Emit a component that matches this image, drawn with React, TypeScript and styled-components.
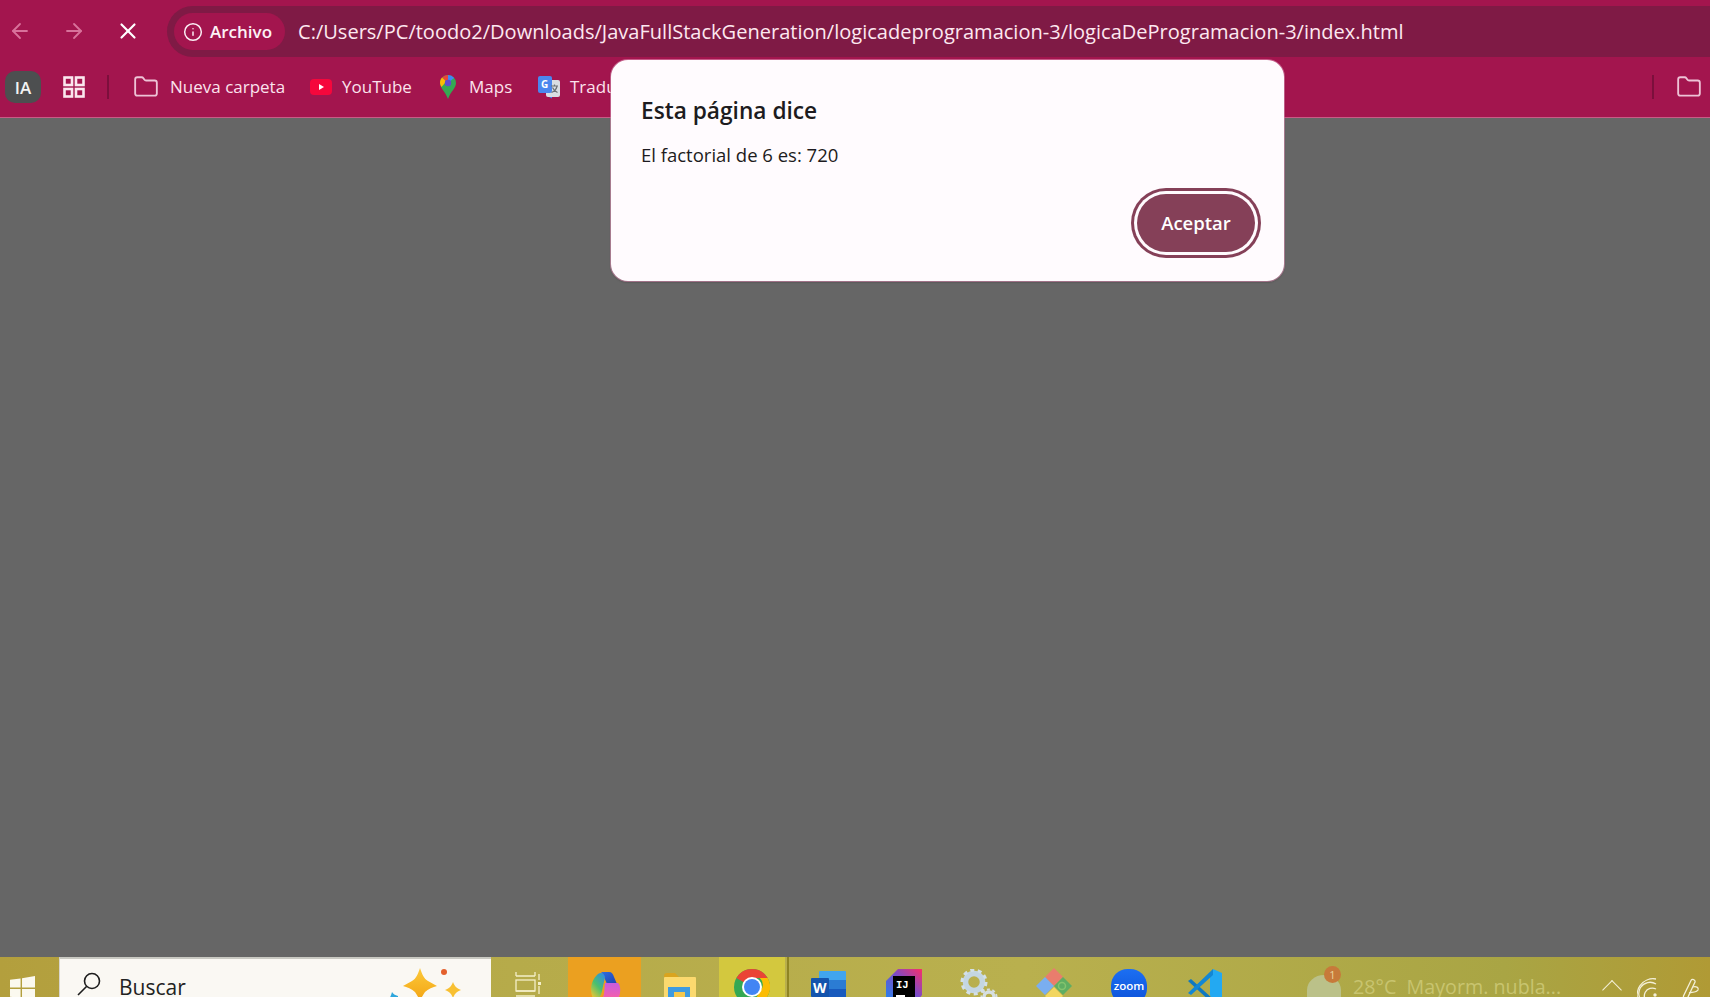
import React from 'react';
import styled, { createGlobalStyle } from 'styled-components';
import { ArrowLeft, ArrowRight, X, Info, Folder } from 'lucide-react';

const GlobalStyle = createGlobalStyle`
  html, body {
    margin: 0;
    padding: 0;
    height: 100%;
    overflow: hidden;
    background: #666666;
    font-family: "Open Sans", "Noto Sans", "Liberation Sans", sans-serif;
  }
`;

const bookmarks = [
  { name: 'Nueva carpeta', icon: <FolderIcon />, width: 175, gap: 11 },
  { name: 'YouTube', icon: <YoutubeIcon />, width: 127, gap: 8 },
  { name: 'Maps', icon: <MapsIcon />, width: 101, gap: 8 },
  { name: 'Traductor', icon: <TranslateIcon />, width: 120, gap: 8 },
];

function FolderIcon() {
  return <Folder size={26} strokeWidth={1.7} color="#eec3d6" />;
}

function YoutubeIcon() {
  return (
    <svg width="24" height="18" viewBox="0 0 24 18">
      <rect x="1" y="1" width="22" height="16" rx="4" fill="#f5073c" />
      <path d="M10 6l5 3-5 3z" fill="#fff" />
    </svg>
  );
}

function MapsIcon() {
  return (
    <svg width="18" height="26" viewBox="0 0 18 26">
      <path d="M9 1a8 8 0 0 1 8 8c0 5-5 8-8 16C6 17 1 14 1 9a8 8 0 0 1 8-8z" fill="#35a853" />
      <path d="M3 3.5A8 8 0 0 1 9 1v5a3 3 0 0 0-2.300 1z" fill="#e8453c" />
      <path d="M9 1a8 8 0 0 1 6.200 3L11.300 7A3 3 0 0 0 9 6z" fill="#4285f4" />
      <path d="M1 9c0-2 .7-4 2-5.500L6.700 7C6.200 7.600 6 8.300 6 9l-3.500 4A8 8 0 0 1 1 9z" fill="#fbbc04" />
      <circle cx="9" cy="9" r="3.200" fill="#5f4bd0" />
    </svg>
  );
}

function TranslateIcon() {
  return (
    <svg width="24" height="24" viewBox="0 0 24 24">
      <rect x="9" y="5" width="14" height="17" rx="2" fill="#d9dde3" />
      <path d="M12 22l3 1.500V22z" fill="#4285f4" />
      <rect x="1" y="1" width="14" height="17" rx="2" fill="#4a86ee" />
      <text x="4" y="13" fontSize="10" fontWeight="700" fill="#fff" fontFamily="Open Sans">G</text>
      <path d="M14 11h7M17.500 9.500v2M20 11.500c-1 3.500-3 5-5.500 6M15.500 12.500c1 2.500 3 4 5 5" stroke="#6b7076" strokeWidth="1.200" fill="none" />
    </svg>
  );
}

function TilesIcon() {
  return (
    <svg width="22" height="22" viewBox="0 0 22 22" fill="none" stroke="#fbe6ee" strokeWidth="2.600">
      <rect x="1.500" y="1.500" width="7.500" height="7.500" />
      <rect x="13" y="1.500" width="7.500" height="7.500" />
      <rect x="1.500" y="13" width="7.500" height="7.500" />
      <rect x="13" y="13" width="7.500" height="7.500" />
    </svg>
  );
}

function WindowsLogo() {
  return (
    <svg width="25" height="25" viewBox="0 0 26 26" fill="#fbf9ef">
      <path d="M0 4l11-1.500V12H0zM12.500 2.300L26 0v12H12.500zM0 13.500h11V23L0 21.500zM12.500 13.500H26V26l-13.500-2.200z" />
    </svg>
  );
}

function SearchGlass() {
  return (
    <svg width="26" height="26" viewBox="0 0 26 26" fill="none" stroke="#1d1d1d" strokeWidth="1.600">
      <circle cx="16" cy="10" r="7.500" />
      <path d="M10.500 15.500L2 24" />
    </svg>
  );
}

function Sparkles() {
  return (
    <svg width="84" height="40" viewBox="0 0 84 40">
      <defs>
        <linearGradient id="starFill" x1="0" y1="0" x2="0" y2="1">
          <stop offset="0" stopColor="#fcc93a" />
          <stop offset="1" stopColor="#f3a312" />
        </linearGradient>
      </defs>
      <path d="M7 29c1 2 3 3 6 4v7H0c3-2 6-6 7-11z" fill="#2ea6dc" />
      <path d="M35 5c2 6 4 11 8 13 3 2 6 3 9 5-4 1-9 3-12 6-2 3-4 6-5 10-1-4-3-7-5-10-3-3-8-5-12-6 3-2 6-3 9-5 4-2 6-7 8-13z" fill="url(#starFill)" />
      <circle cx="59" cy="9" r="3" fill="#e4602c" />
      <path d="M68 19c1 2.500 2 4 3 5 1 1 2.500 2 5 3-2.500 1-4 2-5 3-1 1-2 2.500-3 5-1-2.500-2-4-3-5-1-1-2.500-2-5-3 2.500-1 4-2 5-3 1-1 2-2.500 3-5z" fill="#f8c032" />
    </svg>
  );
}

function TaskViewIcon() {
  return (
    <svg width="30" height="34" viewBox="0 0 30 34" fill="none" stroke="#f4efc8" strokeWidth="1.300">
      <path d="M3 0v4M22 0v4M3 4h19M3 19h19M3 24h19" />
      <rect x="3" y="8" width="19" height="11" />
      <path d="M26 2v6M26 14v8" />
      <rect x="25" y="10" width="3" height="3" fill="#f4efc8" stroke="none" />
    </svg>
  );
}

function CopilotIcon() {
  return (
    <svg width="32" height="30" viewBox="0 0 32 30">
      <defs>
        <linearGradient id="cpLeft" x1="0.800" y1="0" x2="0.200" y2="1">
          <stop offset="0" stopColor="#2f8fe0" />
          <stop offset="0.500" stopColor="#4cc06c" />
          <stop offset="1" stopColor="#f4c62e" />
        </linearGradient>
        <linearGradient id="cpTop" x1="0" y1="0" x2="1" y2="1">
          <stop offset="0" stopColor="#2f6fe0" />
          <stop offset="1" stopColor="#1f3fb0" />
        </linearGradient>
        <linearGradient id="cpRight" x1="0.500" y1="0" x2="0.500" y2="1">
          <stop offset="0" stopColor="#c75ce0" />
          <stop offset="0.700" stopColor="#f05fb0" />
          <stop offset="1" stopColor="#f58a4a" />
        </linearGradient>
      </defs>
      <path d="M12 0h8c3 0 4 2 5 5l3 7H18l-3-7c-1-3-2-4-3-5z" fill="url(#cpTop)" />
      <path d="M9 2c3-2 6-1 7 3l-3 14c-1 5-3 8-8 9C1 22 0 10 9 2z" fill="url(#cpLeft)" />
      <path d="M16 11h13c3 3 3 11 0 16-1 2-3 3-6 3H9c3-1 5-4 6-8z" fill="url(#cpRight)" />
    </svg>
  );
}

function ExplorerIcon() {
  return (
    <svg width="32" height="30" viewBox="0 0 32 30">
      <path d="M0 3c0-2 1-3 3-3h8l4 4H0z" fill="#d9a41f" />
      <rect x="0" y="4" width="32" height="26" rx="1" fill="#fbd96e" />
      <rect x="4" y="14" width="22" height="16" fill="#3f9be0" />
      <rect x="10" y="19" width="11" height="11" fill="#f6c84e" />
    </svg>
  );
}

function ChromeIcon() {
  return (
    <svg width="36" height="36" viewBox="0 0 36 36">
      <circle cx="18" cy="18" r="18" fill="#34a853" />
      <path d="M18 0a18 18 0 0 1 15.600 9H18a9 9 0 0 0-7.800 4.500L2.400 9A18 18 0 0 1 18 0z" fill="#ea4335" />
      <path d="M33.600 9A18 18 0 0 1 18 36l7.800-13.500A9 9 0 0 0 25.800 9z" fill="#fbbc04" />
      <circle cx="18" cy="18" r="10" fill="#fff" />
      <circle cx="18" cy="18" r="8" fill="#4285f4" />
    </svg>
  );
}

function WordIcon() {
  return (
    <svg width="36" height="28" viewBox="0 0 36 28">
      <path d="M9 0h25a1 1 0 0 1 1 1v10H8V1a1 1 0 0 1 1-1z" fill="#41a5ee" />
      <rect x="8" y="9" width="27" height="10" fill="#2b7cd3" />
      <rect x="8" y="18" width="27" height="10" fill="#185abd" />
      <rect x="0" y="7" width="18" height="19" rx="1" fill="#1454ad" />
      <text x="2" y="22" fontSize="14" fontWeight="700" fill="#fff" fontFamily="Open Sans">W</text>
    </svg>
  );
}

function IntellijIcon() {
  return (
    <svg width="36" height="34" viewBox="0 0 36 34">
      <defs>
        <linearGradient id="ijA" x1="0" y1="1" x2="1" y2="0">
          <stop offset="0" stopColor="#1c8af0" />
          <stop offset="0.550" stopColor="#7a4bc8" />
          <stop offset="1" stopColor="#fa2e68" />
        </linearGradient>
      </defs>
      <path d="M12 0h24v26l-6 8H0V12z" fill="url(#ijA)" />
      <rect x="7" y="7" width="22" height="27" fill="#000" />
      <text x="10" y="19" fontSize="10.500" fontWeight="700" fill="#fff" fontFamily="Liberation Mono">IJ</text>
      <rect x="10" y="26" width="9" height="2" fill="#fff" />
    </svg>
  );
}

function GearIcon() {
  return (
    <svg width="38" height="36" viewBox="0 0 38 36" fill="none">
      <circle cx="14" cy="13" r="8.500" stroke="#c4d6e2" strokeWidth="5.500" />
      <circle cx="14" cy="13" r="12" stroke="#d3e0e8" strokeWidth="3" strokeDasharray="4 3.500" />
      <circle cx="29" cy="28" r="5" stroke="#d6dfe2" strokeWidth="3.500" />
      <circle cx="29" cy="28" r="7.500" stroke="#d6dfe2" strokeWidth="2" strokeDasharray="3 2.500" />
    </svg>
  );
}

function DiamondIcon() {
  return (
    <svg width="38" height="36" viewBox="0 0 38 36">
      <path d="M19 2l9 9-9 9-9-9z" fill="#e97d6d" />
      <path d="M10 11l9 9-9 9-9-9z" fill="#7aaef0" />
      <path d="M28 11l9 9-9 9-9-9z" fill="#5fae62" />
      <path d="M19 21l9 9-9 9-9-9z" fill="#f2d660" />
      <circle cx="27" cy="20" r="3.500" fill="none" stroke="#84c46e" strokeWidth="1.500" />
    </svg>
  );
}

function ZoomIcon() {
  return (
    <ZoomBadge>zoom</ZoomBadge>
  );
}

function VscodeIcon() {
  return (
    <svg width="36" height="34" viewBox="0 0 36 34">
      <path d="M27 0l9 4v26l-9 4-3-8V8z" fill="#23a9f2" />
      <path d="M2 12l3-2 22 20-1 4z" fill="#0f78c0" />
      <path d="M2 24l3 2L27 6V0z" fill="#1287d4" />
    </svg>
  );
}

function WifiIcon() {
  return (
    <svg width="24" height="26" viewBox="0 0 24 26" fill="none" stroke="#f4f0d8" strokeWidth="1.300">
      <path d="M2.500 26A16 16 0 0 1 19 2" />
      <path d="M7 26A11 11 0 0 1 19 7" />
      <path d="M11.500 26A6.500 6.500 0 0 1 19 12" />
      <circle cx="18" cy="18" r="1.700" fill="#f4f0d8" stroke="none" />
    </svg>
  );
}

function PenIcon() {
  return (
    <svg width="24" height="26" viewBox="0 0 24 26" fill="none" stroke="#f4f0d8" strokeWidth="1.300">
      <path d="M12 3.500c1-2 4.500-1 4 1.500L9 20c-1 2.500-5 1.500-4.500-1z" />
      <path d="M14 10c3-1 6 .500 5 3-1 2-4 2-9 3" />
      <path d="M4 21c-1.500 1-2 3-1 5" />
    </svg>
  );
}

const taskbarApps = [
  { key: 'copilot', icon: <CopilotIcon />, tone: 'active' as const, width: 73, top: 15 },
  { key: 'explorer', icon: <ExplorerIcon />, width: 78, top: 16 },
  { key: 'chrome', icon: <ChromeIcon />, tone: 'open' as const, width: 66, top: 12 },
];

const pinnedApps = [
  { key: 'word', icon: <WordIcon />, top: 14 },
  { key: 'intellij', icon: <IntellijIcon />, top: 12 },
  { key: 'gear', icon: <GearIcon />, top: 12 },
  { key: 'diamond', icon: <DiamondIcon />, top: 9 },
  { key: 'zoom', icon: <ZoomIcon />, top: 12 },
  { key: 'vscode', icon: <VscodeIcon />, top: 12 },
];

const App: React.FC = () => {
  return (
    <>
      <GlobalStyle />
      <Screen>
        <Toolbar>
          <NavButton><ArrowLeft size={24} strokeWidth={1.8} color="#d8729b" /></NavButton>
          <NavButton><ArrowRight size={24} strokeWidth={1.8} color="#d8729b" /></NavButton>
          <NavButton><X size={26} strokeWidth={2} color="#ffffff" /></NavButton>
          <AddressBar>
            <SecurityChip>
              <Info size={20} strokeWidth={1.8} color="#fbeef4" />
              <ChipLabel>Archivo</ChipLabel>
            </SecurityChip>
            <UrlText>C:/Users/PC/toodo2/Downloads/JavaFullStackGeneration/logicadeprogramacion-3/logicaDeProgramacion-3/index.html</UrlText>
          </AddressBar>
        </Toolbar>

        <BookmarksBar>
          <ProfileChip>IA</ProfileChip>
          <AppsButton><TilesIcon /></AppsButton>
          <BarDivider />
          <BookmarkList>
            {bookmarks.map((b) => (
              <Bookmark key={b.name} $width={b.width}>
                <BookmarkIcon $gap={b.gap}>{b.icon}</BookmarkIcon>
                <BookmarkName>{b.name}</BookmarkName>
              </Bookmark>
            ))}
          </BookmarkList>
          <BarSpacer />
          <BarDivider />
          <OtherFolder><Folder size={26} strokeWidth={1.7} color="#eec3d6" /></OtherFolder>
        </BookmarksBar>

        <PageArea />

        <Taskbar>
          <StartButton><WindowsLogo /></StartButton>
          <SearchBox>
            <SearchGlass />
            <SearchText>Buscar</SearchText>
            <SparkleSlot><Sparkles /></SparkleSlot>
          </SearchBox>
          <TaskViewSlot><TaskViewIcon /></TaskViewSlot>
          {taskbarApps.map((a) => (
            <TaskSlot key={a.key} $tone={a.tone} $width={a.width} $top={a.top}>{a.icon}</TaskSlot>
          ))}
          <TaskDivider />
          {pinnedApps.map((a) => (
            <PinnedSlot key={a.key} $top={a.top}>{a.icon}</PinnedSlot>
          ))}
          <Weather>
            <Cloud>
              <WeatherBadge>1</WeatherBadge>
            </Cloud>
            <WeatherText>28°C&nbsp; Mayorm. nubla...</WeatherText>
          </Weather>
          <Tray>
            <Chevron />
            <WifiIcon />
            <PenIcon />
          </Tray>
        </Taskbar>

        <Dialog>
          <DialogTitle>Esta página dice</DialogTitle>
          <DialogMessage>El factorial de 6 es: 720</DialogMessage>
          <DialogActions>
            <AcceptButton>Aceptar</AcceptButton>
          </DialogActions>
        </Dialog>
      </Screen>
    </>
  );
};

export default App;

const Screen = styled.div`
  position: relative;
  display: flex;
  flex-direction: column;
  width: 1710px;
  height: 997px;
  overflow: hidden;
`;

const Toolbar = styled.div`
  display: flex;
  align-items: center;
  height: 57px;
  padding-top: 6px;
  box-sizing: border-box;
  background: #a3154e;
`;

const NavButton = styled.div`
  display: flex;
  align-items: center;
  justify-content: center;
  width: 53px;
  height: 50px;
  margin-top: -2px;
  flex-shrink: 0;
  &:first-child {
    width: 47px;
    justify-content: flex-start;
    padding-left: 8px;
    box-sizing: border-box;
  }
  &:nth-child(3) {
    padding-left: 2px;
    box-sizing: border-box;
  }
`;

const AddressBar = styled.div`
  display: flex;
  align-items: center;
  flex: 1;
  height: 51px;
  margin-left: 14px;
  padding-left: 7px;
  border-radius: 26px 0 0 26px;
  background: #7f1a45;
`;

const SecurityChip = styled.div`
  display: flex;
  align-items: center;
  gap: 7px;
  height: 37px;
  padding: 0 13px 0 9px;
  border-radius: 19px;
  background: #a3154e;
`;

const ChipLabel = styled.span`
  color: #fdf1f6;
  font-size: 17px;
  font-weight: 600;
`;

const UrlText = styled.span`
  margin-left: 13px;
  color: #fde8f0;
  font-size: 20.050px;
  white-space: nowrap;
`;

const BookmarksBar = styled.div`
  display: flex;
  align-items: center;
  height: 61px;
  padding-left: 5px;
  box-sizing: border-box;
  background: #a3154e;
  border-bottom: 1px solid #c95b86;
`;

const ProfileChip = styled.div`
  display: flex;
  align-items: center;
  justify-content: center;
  width: 36px;
  height: 32px;
  border-radius: 10px;
  background: #4d4f50;
  color: #f3f3f3;
  font-size: 17px;
  font-weight: 600;
`;

const AppsButton = styled.div`
  display: flex;
  justify-content: center;
  width: 66px;
`;

const BarDivider = styled.div`
  width: 2px;
  height: 24px;
  flex-shrink: 0;
  background: #7c0f3c;
`;

const BookmarkList = styled.div`
  display: flex;
  align-items: center;
  margin-left: 24px;
`;

const Bookmark = styled.div<{ $width: number }>`
  display: flex;
  align-items: center;
  width: ${({ $width }) => $width}px;
  flex-shrink: 0;
  color: #fbe3ed;
  font-size: 17px;
  white-space: nowrap;
`;

const BookmarkIcon = styled.span<{ $gap: number }>`
  display: flex;
  justify-content: center;
  align-items: center;
  width: 26px;
  margin-right: ${({ $gap }) => $gap}px;
`;

const BookmarkName = styled.span`
  padding-bottom: 2px;
`;

const BarSpacer = styled.div`
  flex: 1;
`;

const OtherFolder = styled.div`
  display: flex;
  margin-left: 22px;
  margin-right: 8px;
`;

const PageArea = styled.div`
  flex: 1;
  background: #666666;
`;

const Taskbar = styled.div`
  display: flex;
  height: 40px;
  flex-shrink: 0;
  overflow: hidden;
  background: linear-gradient(90deg, #b39f3d 0%, #b6ab4a 30%, #b9b04e 60%, #a9a544 88%, #b09a35 100%);
`;

const StartButton = styled.div`
  display: flex;
  justify-content: flex-start;
  width: 59px;
  padding: 19px 0 0 10px;
  box-sizing: border-box;
  flex-shrink: 0;
`;

const SearchBox = styled.div`
  display: flex;
  width: 432px;
  flex-shrink: 0;
  padding: 12px 0 0 16px;
  box-sizing: border-box;
  background: #faf8f3;
  border-top: 2px solid #c9c9c2;
  border-left: 1px solid #d8d6cf;
`;

const SearchText = styled.span`
  margin-left: 17px;
  padding-top: 3px;
  color: #222222;
  font-size: 21px;
  line-height: 27px;
`;

const SparkleSlot = styled.div`
  margin-left: auto;
  margin-right: 22px;
  margin-top: -8px;
`;

const TaskViewSlot = styled.div`
  display: flex;
  justify-content: center;
  width: 77px;
  padding: 15px 4px 0 0;
  box-sizing: border-box;
`;

const TaskSlot = styled.div<{ $tone?: 'active' | 'open'; $width: number; $top: number }>`
  display: flex;
  justify-content: center;
  width: ${({ $width }) => $width}px;
  padding-top: ${({ $top }) => $top}px;
  box-sizing: border-box;
  flex-shrink: 0;
  background: ${({ $tone }) =>
    $tone === 'active' ? '#eba020' : $tone === 'open' ? '#d3c83e' : 'transparent'};
`;

const TaskDivider = styled.div`
  width: 2px;
  flex-shrink: 0;
  background: #8f8422;
  margin: 0 2.500px 0 2px;
`;

const PinnedSlot = styled.div<{ $top: number }>`
  display: flex;
  justify-content: center;
  width: 75px;
  padding-top: ${({ $top }) => $top}px;
  box-sizing: border-box;
  flex-shrink: 0;
`;

const ZoomBadge = styled.div`
  display: flex;
  align-items: center;
  justify-content: center;
  width: 36px;
  height: 36px;
  padding-bottom: 4px;
  box-sizing: border-box;
  border-radius: 46%;
  background: linear-gradient(180deg, #1c6ff2, #0b50d8);
  color: #ffffff;
  font-size: 11.500px;
  font-weight: 600;
`;

const Weather = styled.div`
  display: flex;
  margin-left: 65.500px;
  flex-shrink: 0;
  width: 298px;
`;

const Cloud = styled.div`
  position: relative;
  width: 34px;
  height: 30px;
  margin-top: 18px;
  border-radius: 50% 50% 0 0;
  background: #bbc189;
`;

const WeatherBadge = styled.span`
  position: absolute;
  top: -9px;
  right: 0;
  display: flex;
  align-items: center;
  justify-content: center;
  width: 17px;
  height: 17px;
  border-radius: 50%;
  background: #c77a3a;
  color: #e9d39c;
  font-size: 11px;
`;

const WeatherText = styled.span`
  margin-left: 12px;
  padding-top: 16px;
  color: #c8c46f;
  font-size: 19.700px;
  line-height: 27px;
  white-space: nowrap;
`;

const Tray = styled.div`
  display: flex;
  align-items: flex-start;
  gap: 18px;
  padding-top: 20px;
`;

const Chevron = styled.span`
  width: 13px;
  height: 13px;
  margin-top: 6px;
  border-top: 1.500px solid #f4f0d8;
  border-left: 1.500px solid #f4f0d8;
  transform: rotate(45deg);
`;

const Dialog = styled.div`
  position: absolute;
  top: 60px;
  left: 611px;
  width: 673px;
  height: 221px;
  padding: 37px 25px 25px 30px;
  box-sizing: border-box;
  display: flex;
  flex-direction: column;
  border-radius: 17px;
  background: #fffbfe;
  box-shadow: 0 0 0 1px rgba(230, 150, 185, 0.55), 0 1px 2px rgba(40, 30, 35, 0.55);
`;

const DialogTitle = styled.div`
  color: #1d1b20;
  font-size: 22.700px;
  font-weight: 600;
  line-height: 28px;
`;

const DialogMessage = styled.div`
  margin-top: 17px;
  color: #1d1b20;
  font-size: 18.500px;
  line-height: 26px;
`;

const DialogActions = styled.div`
  display: flex;
  justify-content: flex-end;
  margin-top: auto;
`;

const AcceptButton = styled.div`
  display: flex;
  align-items: center;
  justify-content: center;
  width: 118px;
  height: 58px;
  margin: 4px;
  padding-bottom: 2px;
  box-sizing: border-box;
  border-radius: 30px;
  background: #854058;
  color: #ffffff;
  font-size: 18.500px;
  font-weight: 600;
  box-shadow: 0 0 0 3px #fffbfe, 0 0 0 6px #854058;
`;
